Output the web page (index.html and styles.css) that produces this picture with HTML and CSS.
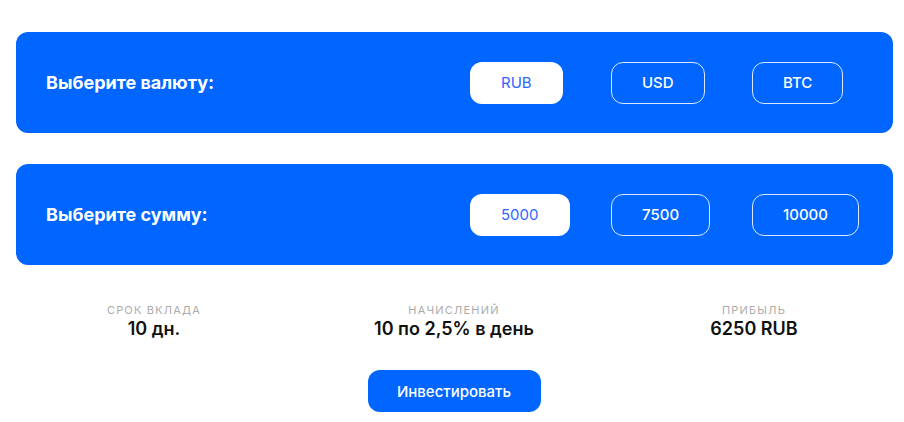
FILE: index.html
```html
<!DOCTYPE html>
<html>
<head lang="ru">
    <meta charset="UTF-8">
    <title>Инвестировать</title>
    <link rel="stylesheet" href="styles.css">
</head>
<body>
    <div id="calc">
        <div class="panel">
            <div class="panel-title">Выберите валюту:</div>
            <ul class="options">
                <li class="selected">RUB</li>
                <li>USD</li>
                <li>BTC</li>
            </ul>
        </div>
        <div class="panel">
            <div class="panel-title">Выберите сумму:</div>
            <ul class="options">
                <li class="selected">5000</li>
                <li>7500</li>
                <li>10000</li>
            </ul>
        </div>
    </div>

    <div class="stats">
        <div class="stat">
            <div class="stat-label">Срок вклада</div>
            <div class="stat-value">10 дн.</div>
        </div>
        <div class="stat">
            <div class="stat-label">Начислений</div>
            <div class="stat-value">10 по 2,5% в день</div>
        </div>
        <div class="stat">
            <div class="stat-label">Прибыль</div>
            <div class="stat-value">6250 RUB</div>
        </div>
    </div>

    <div class="actions">
        <button class="invest">Инвестировать</button>
    </div>
</body>
</html>
```

FILE: styles.css
```css
*{
    margin: 0;
    padding: 0;
    box-sizing: border-box;
}
body{
    font-family: Inter, "Noto Sans", sans-serif;
    background: #fff;
    color: #111;
}
#calc{
    padding: 32px 11px 0 16px;
    display: flex;
    flex-direction: column;
    gap: 31px;
}
.panel{
    background: #0066ff;
    border-radius: 12px;
    height: 101px;
    padding-left: 30px;
    display: flex;
    align-items: center;
    justify-content: space-between;
}
.panel-title{
    color: #fff;
    font-size: 18px;
    font-weight: 700;
}
.options{
    list-style: none;
    display: grid;
    grid-template-columns: repeat(3, 141px);
    justify-items: start;
}
.options li{
    height: 42px;
    line-height: 40px;
    padding: 0 30px;
    border: 1px solid rgba(255,255,255,0.85);
    border-radius: 12px;
    color: #fff;
    font-size: 15px;
    font-weight: 500;
    cursor: pointer;
}
.options .selected{
    background: #fff;
    color: #2f66ff;
    font-weight: 400;
}
.stats{
    display: grid;
    grid-template-columns: repeat(3, 1fr);
    margin-top: 38px;
    padding-left: 4px;
    text-align: center;
}
.stat-label{
    font-size: 11px;
    line-height: 14px;
    letter-spacing: 1.2px;
    text-transform: uppercase;
    color: #ababab;
}
.stat-value{
    margin-top: 1px;
    font-size: 18px;
    line-height: 22px;
    font-weight: 600;
    color: #111;
}
.actions{
    display: flex;
    justify-content: center;
    padding-left: 4px;
    margin-top: 30px;
}
.invest{
    width: 173px;
    height: 42px;
    border: 0;
    border-radius: 12px;
    background: #0066ff;
    color: #fff;
    font-family: inherit;
    font-size: 15px;
    font-weight: 500;
    cursor: pointer;
}
```
